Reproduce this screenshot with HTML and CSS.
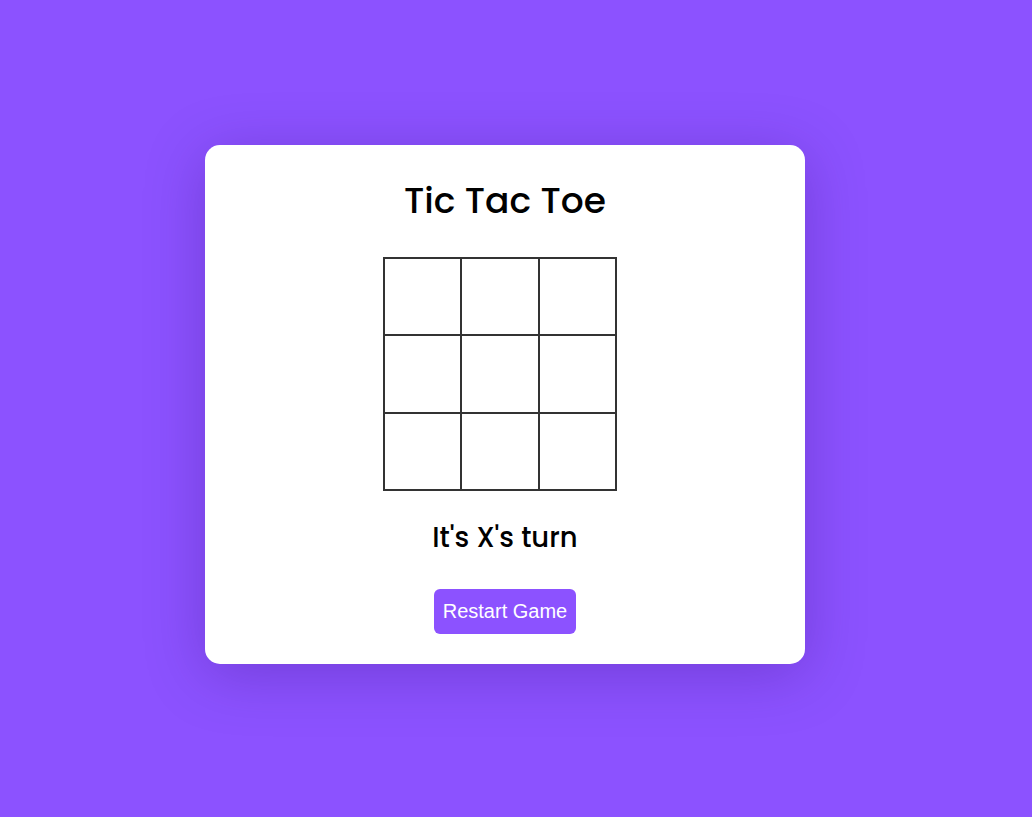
FILE: index.html
```html
<!DOCTYPE html>
<html lang="en">
<head>
<meta charset="utf-8">
<title>Tic Tac Toe</title>
<link rel="stylesheet" href="styles.css">
</head>
<body>
  <main class="card">
    <h1 class="title">Tic Tac Toe</h1>
    <div class="board">
      <div class="cell"></div><div class="cell"></div><div class="cell"></div>
      <div class="cell"></div><div class="cell"></div><div class="cell"></div>
      <div class="cell"></div><div class="cell"></div><div class="cell"></div>
    </div>
    <p class="status">It's X's turn</p>
    <button class="restart">Restart Game</button>
  </main>
</body>
</html>
```
FILE: styles.css
```css
html, body {
  margin: 0;
  height: 100%;
}
body {
  background: #8c52ff;
  display: flex;
  align-items: center;
  justify-content: center;
  padding: 0 22px 8px 0;
  box-sizing: border-box;
  font-family: "Poppins", "Inter", "Open Sans", sans-serif;
}
.card {
  width: 600px;
  box-sizing: border-box;
  background: #fff;
  border-radius: 15px;
  padding: 32px 0 30px;
  display: flex;
  flex-direction: column;
  align-items: center;
  box-shadow: 0 10px 60px rgba(40, 0, 100, 0.25);
}
.title {
  margin: 0 0 32px;
  font-size: 36px;
  line-height: 48px;
  font-weight: 500;
  color: #000;
}
.board {
  display: grid;
  grid-template-columns: repeat(3, 75.5px);
  grid-template-rows: repeat(3, 75.5px);
  gap: 2px;
  padding: 2px;
  margin-right: 10px;
  background: #333;
}
.cell {
  background: #fff;
}
.status {
  margin: 30px 0 34px;
  font-size: 27.5px;
  line-height: 34px;
  font-weight: 500;
  color: #000;
}
.restart {
  border: none;
  border-radius: 6px;
  background: #8c52ff;
  color: #fff;
  font-family: "Liberation Sans", Arial, sans-serif;
  font-size: 20px;
  line-height: 23px;
  padding: 11px 9px;
  cursor: pointer;
}
```
